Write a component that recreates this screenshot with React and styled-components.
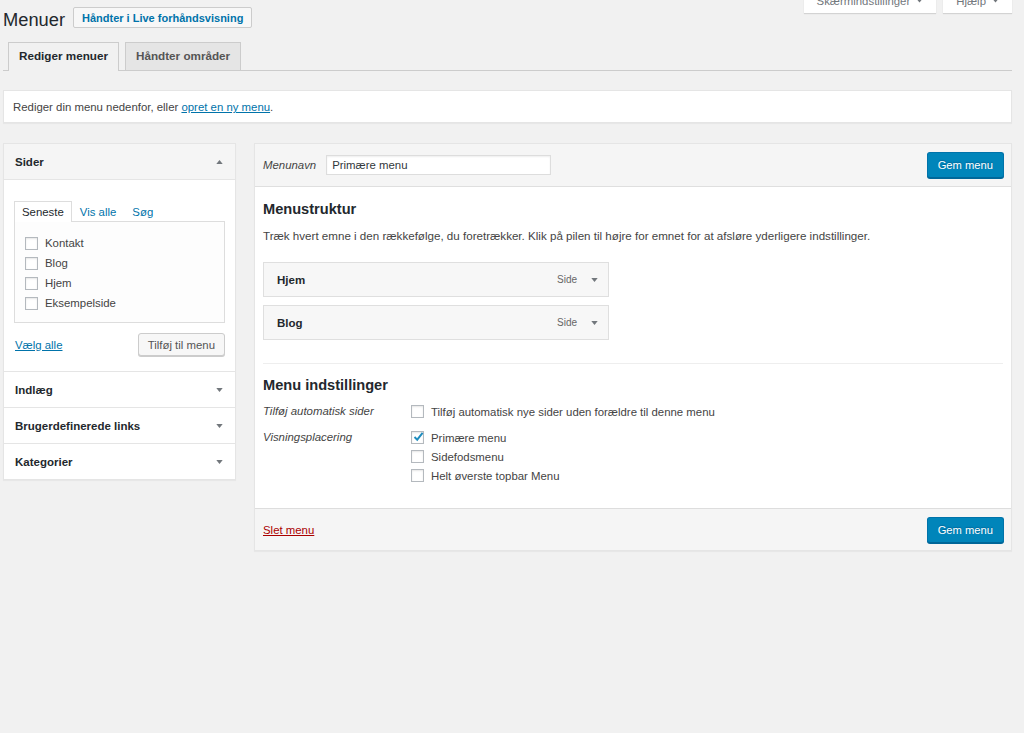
import React from 'react'
import styled, { createGlobalStyle } from 'styled-components'

const GlobalStyle = createGlobalStyle`
  html, body {
    margin: 0;
    padding: 0;
    background: #f1f1f1;
  }
  body {
    font-family: "Liberation Sans", Arial, sans-serif;
    font-size: 11.4px;
    line-height: 16px;
    color: #444;
  }
  #root {
    min-height: 733px;
  }
`

const Wrap = styled.div`
  padding: 0 12px 0 3px;
`

const Header = styled.div`
  display: flex;
  align-items: flex-start;
  padding-top: 7px;
`

const TitleGroup = styled.div`
  display: flex;
  align-items: flex-start;
  gap: 8px;
`

const Title = styled.h1`
  margin: 2px 0 0;
  font-size: 18.3px;
  line-height: 21px;
  font-weight: 400;
  color: #23282d;
`

const LiveButton = styled.a`
  display: flex;
  align-items: center;
  height: 21px;
  box-sizing: border-box;
  padding: 0 8px;
  border: 1px solid #ccc;
  border-radius: 2px;
  background: #f7f7f7;
  color: #0073aa;
  font-size: 11px;
  font-weight: 700;
  text-decoration: none;
`

const ScreenMeta = styled.div`
  margin-left: auto;
  margin-top: -20px;
  display: flex;
  gap: 7px;
`

const MetaButton = styled.button`
  display: flex;
  align-items: center;
  gap: 7px;
  height: 26px;
  padding: 2px 14px 0 13px;
  border: none;
  background: #fff;
  box-shadow: 0 1px 1px rgba(0, 0, 0, 0.12);
  font-family: inherit;
  font-size: 11.4px;
  color: #72777c;
`

const Arrow = ({ up, color = '#72777c', w = 7 }) => (
  <svg width={w} height={4} viewBox="0 0 8 5" style={{ display: 'block', flex: 'none' }}>
    <path d={up ? 'M0 5 L4 0 L8 5 Z' : 'M0 0 L8 0 L4 5 Z'} fill={color} />
  </svg>
)

const TabNav = styled.div`
  display: flex;
  align-items: flex-end;
  gap: 6px;
  margin-top: 12px;
  padding-left: 5px;
  border-bottom: 1px solid #ccc;
`

const Tab = styled.a`
  display: flex;
  align-items: center;
  box-sizing: border-box;
  height: ${p => (p.$active ? '29px' : '28px')};
  margin-bottom: ${p => (p.$active ? '-1px' : '0')};
  padding: 0 10px ${p => (p.$active ? '2px' : '1px')};
  border: 1px solid #ccc;
  border-bottom: none;
  background: ${p => (p.$active ? '#f1f1f1' : '#e5e5e5')};
  color: ${p => (p.$active ? '#23282d' : '#555')};
  font-size: 11.7px;
  font-weight: 700;
  text-decoration: none;
`

const Notice = styled.div`
  margin-top: 19px;
  padding: 8px 9px 7px;
  background: #fff;
  border: 1px solid #e5e5e5;
  box-shadow: 0 1px 1px rgba(0, 0, 0, 0.04);
`

const Link = styled.a`
  color: ${p => (p.$danger ? '#a00' : '#0073aa')};
  text-decoration: underline;
`

const Columns = styled.div`
  display: flex;
  align-items: flex-start;
  gap: 18px;
  margin-top: 20px;
`

const SidePanel = styled.div`
  width: 233px;
  flex: none;
  box-sizing: border-box;
  background: #fff;
  border: 1px solid #e5e5e5;
  box-shadow: 0 1px 1px rgba(0, 0, 0, 0.04);
`

const SectionHead = styled.div`
  display: flex;
  align-items: center;
  justify-content: space-between;
  height: 35px;
  padding: 0 12px 0 11px;
  background: ${p => (p.$open ? '#f5f5f5' : '#fff')};
  border-top: ${p => (p.$first ? 'none' : '1px solid #e5e5e5')};
  border-bottom: ${p => (p.$open ? '1px solid #e5e5e5' : 'none')};
  color: #23282d;
  font-size: 11.5px;
  font-weight: 700;
`

const SectionBody = styled.div`
  padding: 21px 10px 15px 10px;
`

const PickTabs = styled.div`
  display: flex;
  align-items: flex-end;
  height: 20px;
`

const PickTab = styled.a`
  display: flex;
  align-items: center;
  box-sizing: border-box;
  height: ${p => (p.$active ? '21px' : '20px')};
  margin-bottom: ${p => (p.$active ? '-1px' : '0')};
  padding: 0 7px;
  border: 1px solid ${p => (p.$active ? '#ddd' : 'transparent')};
  border-bottom: none;
  background: ${p => (p.$active ? '#fff' : 'transparent')};
  color: ${p => (p.$active ? '#23282d' : '#0073aa')};
  text-decoration: none;
  position: relative;
  z-index: 1;
`

const PickList = styled.div`
  border: 1px solid #ddd;
  background: #fdfdfd;
  padding: 11px 10px 9px;
`

const CheckRow = styled.label`
  display: flex;
  align-items: center;
  gap: 7px;
  height: ${p => p.$h || 20}px;
  color: #444;
`

const BoxWrap = styled.span`
  display: block;
  width: 13px;
  height: 13px;
  flex: none;
  box-sizing: border-box;
  border: 1px solid #b4b9be;
  background: #fff;
  box-shadow: inset 0 1px 2px rgba(0, 0, 0, 0.1);
  position: relative;
`

const Check = styled.svg`
  position: absolute;
  left: -1px;
  top: -3px;
`

const Checkbox = ({ checked }) => (
  <BoxWrap>
    {checked && (
      <Check width="15" height="15" viewBox="0 0 15 15">
        <path d="M3.5 8 L6.2 10.7 L11.6 3.8" fill="none" stroke="#1e8cbe" strokeWidth="1.9" />
      </Check>
    )}
  </BoxWrap>
)

const PickActions = styled.div`
  display: flex;
  align-items: center;
  justify-content: space-between;
  margin-top: 10px;
  padding-left: 1px;
`

const Button = styled.button`
  height: 23px;
  padding: 0 9px;
  border: 1px solid #ccc;
  border-radius: 3px;
  background: #f7f7f7;
  box-shadow: 0 1px 0 #ccc;
  font-family: inherit;
  font-size: 11.4px;
  color: #555;
`

const PrimaryButton = styled.button`
  height: 26px;
  padding: 0 10px;
  margin-left: ${p => (p.$push ? 'auto' : '0')};
  border: 1px solid #0073aa;
  border-bottom-color: #006799;
  border-radius: 3px;
  background: #0085ba;
  box-shadow: 0 1px 0 #006799;
  font-family: inherit;
  font-size: 11.2px;
  color: #fff;
  text-shadow: 0 -1px 1px #006799;
`

const EditPanel = styled.div`
  flex: 1;
  background: #fff;
  border: 1px solid #e5e5e5;
  box-shadow: 0 1px 1px rgba(0, 0, 0, 0.04);
`

const EditHead = styled.div`
  display: flex;
  align-items: center;
  height: 42px;
  padding: 0 7px 0 8px;
  background: #f5f5f5;
  border-bottom: 1px solid #dfdfdf;
`

const FieldLabel = styled.span`
  font-style: italic;
  color: #444;
`

const NameInput = styled.div`
  width: 225px;
  height: 20px;
  box-sizing: border-box;
  margin-left: 10px;
  padding: 0 5px;
  display: flex;
  align-items: center;
  border: 1px solid #ddd;
  background: #fff;
  box-shadow: inset 0 1px 2px rgba(0, 0, 0, 0.07);
  color: #32373c;
`

const EditBody = styled.div`
  padding: 13px 8px 23px;
`

const Heading = styled.h3`
  margin: ${p => p.$top || 0}px 0 0;
  font-size: 14.6px;
  line-height: 18px;
  font-weight: 700;
  color: #23282d;
`

const Description = styled.p`
  margin: 10px 0 0;
  font-size: 11.6px;
`

const ItemList = styled.div`
  display: flex;
  flex-direction: column;
  gap: 8px;
  margin-top: 18px;
`

const Item = styled.div`
  width: 346px;
  height: 35px;
  box-sizing: border-box;
  display: flex;
  align-items: center;
  padding: 0 10px 0 13px;
  border: 1px solid #dfdfdf;
  background: #f7f7f7;
  color: #23282d;
  font-size: 11.5px;
  font-weight: 700;
`

const ItemType = styled.span`
  margin-left: auto;
  margin-right: 14px;
  font-size: 10px;
  font-weight: 400;
  color: #666;
`

const Separator = styled.div`
  margin-top: 23px;
  border-top: 1px solid #eee;
`

const Settings = styled.div`
  display: grid;
  grid-template-columns: 148px 1fr;
  row-gap: 7px;
  margin-top: 8px;
`

const SettingLabel = styled.div`
  font-style: italic;
  line-height: 19px;
  color: #444;
`

const EditFoot = styled.div`
  display: flex;
  align-items: center;
  justify-content: space-between;
  height: 41px;
  padding: 0 7px 0 8px;
  background: #f5f5f5;
  border-top: 1px solid #ddd;
`

const pages = ['Kontakt', 'Blog', 'Hjem', 'Eksempelside']
const closedSections = ['Indlæg', 'Brugerdefinerede links', 'Kategorier']
const locations = [
  { label: 'Primære menu', checked: true },
  { label: 'Sidefodsmenu' },
  { label: 'Helt øverste topbar Menu' },
]

export default function App() {
  return (
    <>
      <GlobalStyle />
      <Wrap>
        <Header>
          <TitleGroup>
            <Title>Menuer</Title>
            <LiveButton>Håndter i Live forhåndsvisning</LiveButton>
          </TitleGroup>
          <ScreenMeta>
            <MetaButton>Skærmindstillinger <Arrow w={5} /></MetaButton>
            <MetaButton>Hjælp <Arrow w={5} /></MetaButton>
          </ScreenMeta>
        </Header>

        <TabNav>
          <Tab $active>Rediger menuer</Tab>
          <Tab>Håndter områder</Tab>
        </TabNav>

        <Notice>
          Rediger din menu nedenfor, eller <Link>opret en ny menu</Link>.
        </Notice>

        <Columns>
          <SidePanel>
            <SectionHead $open $first>
              Sider <Arrow up />
            </SectionHead>
            <SectionBody>
              <PickTabs>
                <PickTab $active>Seneste</PickTab>
                <PickTab>Vis alle</PickTab>
                <PickTab>Søg</PickTab>
              </PickTabs>
              <PickList>
                {pages.map(p => (
                  <CheckRow key={p}>
                    <Checkbox />
                    {p}
                  </CheckRow>
                ))}
              </PickList>
              <PickActions>
                <Link>Vælg alle</Link>
                <Button>Tilføj til menu</Button>
              </PickActions>
            </SectionBody>
            {closedSections.map(s => (
              <SectionHead key={s}>
                {s} <Arrow />
              </SectionHead>
            ))}
          </SidePanel>

          <EditPanel>
            <EditHead>
              <FieldLabel>Menunavn</FieldLabel>
              <NameInput>Primære menu</NameInput>
              <PrimaryButton $push>Gem menu</PrimaryButton>
            </EditHead>
            <EditBody>
              <Heading>Menustruktur</Heading>
              <Description>
                Træk hvert emne i den rækkefølge, du foretrækker. Klik på pilen til højre for emnet for at afsløre yderligere indstillinger.
              </Description>
              <ItemList>
                <Item>
                  Hjem <ItemType>Side</ItemType> <Arrow />
                </Item>
                <Item>
                  Blog <ItemType>Side</ItemType> <Arrow />
                </Item>
              </ItemList>
              <Separator />
              <Heading $top={12}>Menu indstillinger</Heading>
              <Settings>
                <SettingLabel>Tilføj automatisk sider</SettingLabel>
                <CheckRow $h={19}>
                  <Checkbox />
                  Tilføj automatisk nye sider uden forældre til denne menu
                </CheckRow>
                <SettingLabel>Visningsplacering</SettingLabel>
                <div>
                  {locations.map(l => (
                    <CheckRow key={l.label} $h={19}>
                      <Checkbox checked={l.checked} />
                      {l.label}
                    </CheckRow>
                  ))}
                </div>
              </Settings>
            </EditBody>
            <EditFoot>
              <Link $danger>Slet menu</Link>
              <PrimaryButton>Gem menu</PrimaryButton>
            </EditFoot>
          </EditPanel>
        </Columns>
      </Wrap>
    </>
  )
}
